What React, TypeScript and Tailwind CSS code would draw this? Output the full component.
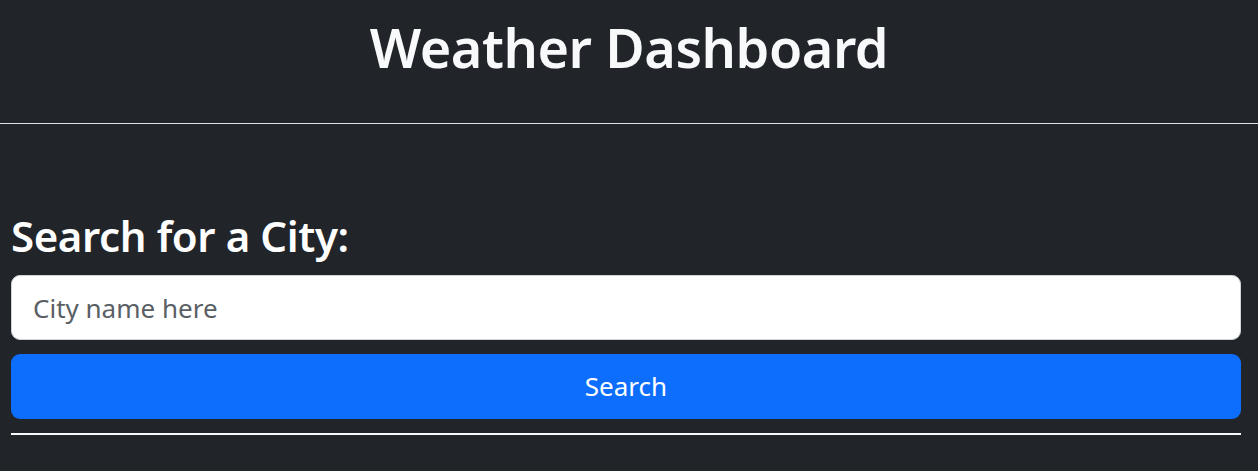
export default function App() {
  return (
    <div className="min-h-screen w-full bg-[#212529] text-[#f8f9fa] font-['Noto_Sans',sans-serif]">
      {/* Header */}
      <header className="h-[124px] border-b border-[#dee2e6] flex justify-center pt-[8px]">
        <h1 className="text-[54px] leading-[78px] font-semibold tracking-[-0.45px]">Weather Dashboard</h1>
      </header>

      {/* Search */}
      <section className="pl-[11px] pr-[17px] pt-[85px]">
        <h2 className="text-[42px] leading-[54px] font-semibold text-white tracking-[-0.4px]">Search for a City:</h2>
        <input
          type="text"
          placeholder="City name here"
          className="mt-[12px] w-full h-[65px] rounded-[9px] border border-[#ced4da] bg-white px-[21px] text-[26px] text-[#212529] placeholder:text-[#5a5f66] outline-none"
        />
        <button className="mt-[14px] w-full h-[65px] rounded-[9px] bg-[#0d6efd] text-white text-[26px]">
          Search
        </button>
        <div className="mt-[14px] h-[2px] bg-[#f8f9fa]" />
      </section>
    </div>
  );
}
